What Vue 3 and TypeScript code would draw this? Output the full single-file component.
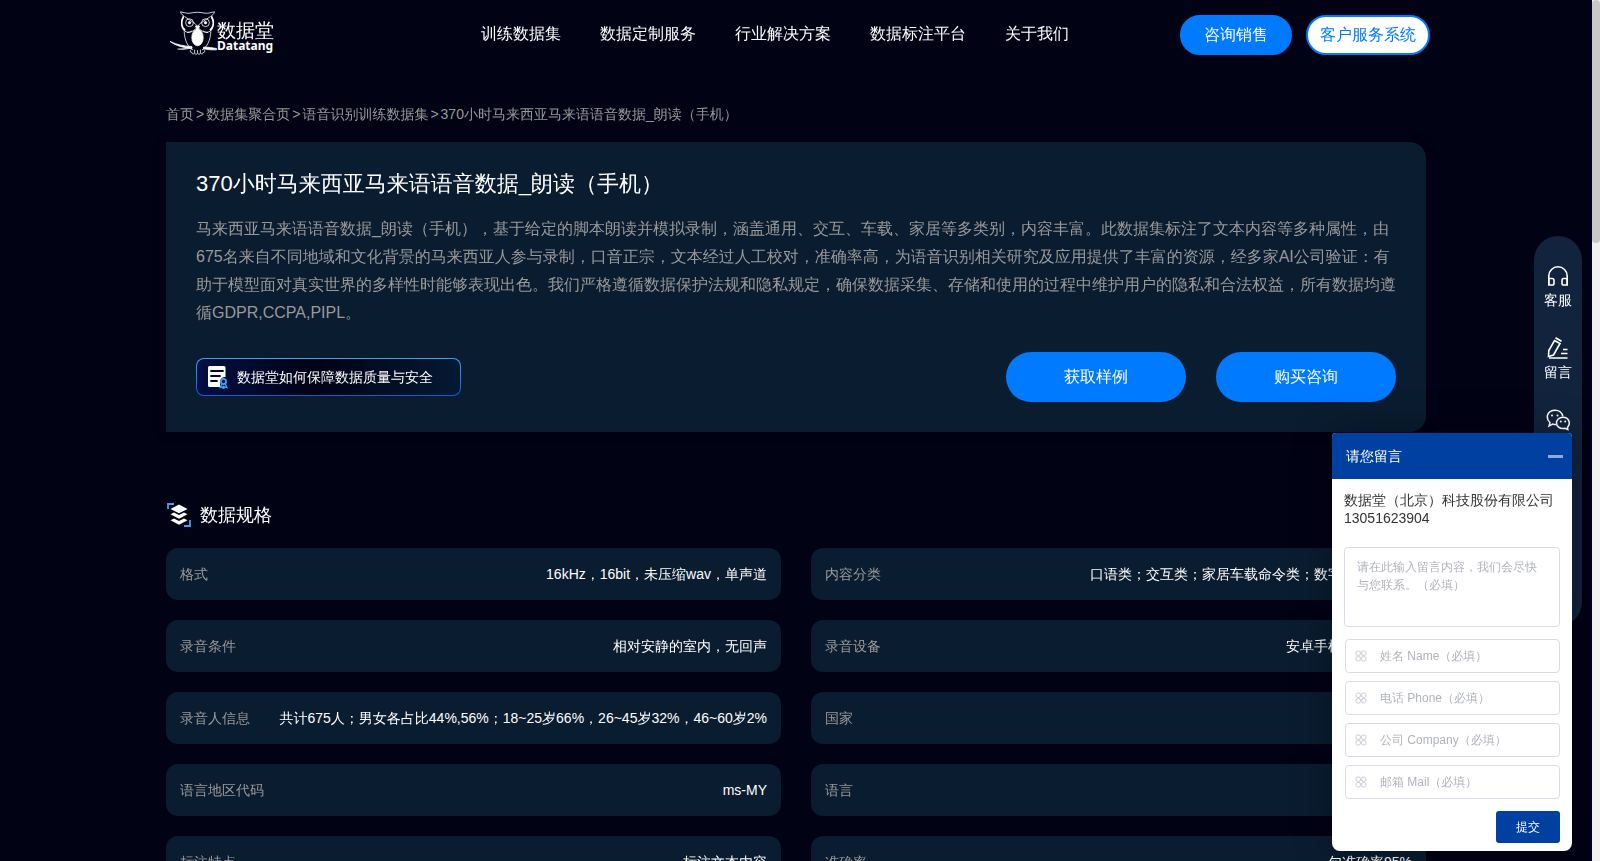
<script setup lang="ts">
import { ref } from 'vue'

interface Spec {
  label: string
  value: string
}

const navItems: string[] = ['训练数据集', '数据定制服务', '行业解决方案', '数据标注平台', '关于我们']
const crumbs: string[] = ['首页', '数据集聚合页', '语音识别训练数据集']
const title = '370小时马来西亚马来语语音数据_朗读（手机）'

const specs: Spec[] = [
  { label: '格式', value: '16kHz，16bit，未压缩wav，单声道' },
  { label: '内容分类', value: '口语类；交互类；家居车载命令类；数字类；通用类' },
  { label: '录音条件', value: '相对安静的室内，无回声' },
  { label: '录音设备', value: '安卓手机，苹果手机' },
  { label: '录音人信息', value: '共计675人；男女各占比44%,56%；18~25岁66%，26~45岁32%，46~60岁2%' },
  { label: '国家', value: '马来西亚' },
  { label: '语言地区代码', value: 'ms-MY' },
  { label: '语言', value: '马来语' },
  { label: '标注特点', value: '标注文本内容' },
  { label: '准确率', value: '句准确率95%' },
]

const fields = ref([
  { id: 'name', placeholder: '姓名 Name（必填）', value: '' },
  { id: 'phone', placeholder: '电话 Phone（必填）', value: '' },
  { id: 'company', placeholder: '公司 Company（必填）', value: '' },
  { id: 'mail', placeholder: '邮箱 Mail（必填）', value: '' },
])
const message = ref('')
</script>

<template>
  <div class="page">
    <header class="header">
      <a class="logo" href="#" aria-label="数据堂 Datatang">
        <svg width="108" height="46" viewBox="0 0 108 46" fill="none" stroke="#fff" stroke-width=".8">
          <path d="M10.500 .8C14 1.500 17 2.600 20 2.200c5-1.200 10-1.200 15 0 3 .4 6-.7 9.500-1.400-.8 2.700-2.400 3.600-3.500 4.200 3 5.500 3.200 11.500-.5 15C36 23 31 20.500 27.500 15.500 24 20.500 19 23 14.500 20c-3.700-3.500-3.500-9.500-.5-15-1.100-.6-2.700-1.500-3.500-4.200Z" />
          <path d="M14.500 5.500 25 12.500l2.500 3 2.500-3 10.500-7" />
          <path d="M13.500 5.500c-3 5-2 10.500 1.500 14M41.500 5.500c3 5 2 10.500-1.500 14" stroke-width="1.800" />
          <circle cx="19.500" cy="11.700" r="3.900" />
          <circle cx="35.500" cy="11.700" r="3.900" />
          <circle cx="19.500" cy="11.700" r="1.200" fill="#fff" />
          <circle cx="35.500" cy="11.700" r="1.200" fill="#fff" />
          <path d="M14.200 20.500c.3 8.500 3.500 15.500 8.800 18.500M40.800 20.500c-.3 8.500-3.500 15.500-8.800 18.500M17 21.500c1.500 0 3.500-.6 5-1.600M38 21.500c-1.500 0-3.500-.6-5-1.600" />
          <path d="m25.500 15 2 5 2-5Z" fill="#fff" />
          <ellipse cx="27.500" cy="26.500" rx="5.700" ry="8.300" fill="#fff" />
          <path d="M0 30.400c7 3.500 14 4.600 22 5.200v1.800C14 36.700 6 35 0 30.400ZM7.500 38c5 .6 9.500.2 14-1.200M33.500 36.200c5-.2 9 .6 13 1.300v1.300c-4 .2-8 0-13-1Z" fill="#fff" />
          <path d="M21 38.500c-1.600 1.700-.4 3.500.8 2.700.2 2.300 2.300 2.200 2.800.4.400 2.400 2.500 2.200 2.900 0 .4 2.200 2.500 2.400 2.900 0 .5 1.800 2.600 1.900 2.800-.4 1.200.8 2.400-1 .8-2.700M24.600 41.500v-2.800M27.500 41.500v-2.300M30.400 41.500v-2.800" />
          <text class="logo-cn" x="47" y="26">数据堂</text>
          <text class="logo-en" x="47" y="39">Datatang</text>
        </svg>
      </a>
      <nav class="nav">
        <a v-for="item in navItems" :key="item" href="#">{{ item }}</a>
      </nav>
      <div class="actions">
        <button class="pill sales" type="button">咨询销售</button>
        <button class="pill portal" type="button">客户服务系统</button>
      </div>
    </header>

    <main class="main">
      <nav class="crumbs" aria-label="breadcrumb">
        <template v-for="c in crumbs" :key="c">
          <a href="#">{{ c }}</a><span class="sep">&gt;</span>
        </template>
        <span>{{ title }}</span>
      </nav>

      <section class="hero">
        <h1>{{ title }}</h1>
        <p>马来西亚马来语语音数据_朗读（手机），基于给定的脚本朗读并模拟录制，涵盖通用、交互、车载、家居等多类别，内容丰富。此数据集标注了文本内容等多种属性，由675名来自不同地域和文化背景的马来西亚人参与录制，口音正宗，文本经过人工校对，准确率高，为语音识别相关研究及应用提供了丰富的资源，经多家AI公司验证：有助于模型面对真实世界的多样性时能够表现出色。我们严格遵循数据保护法规和隐私规定，确保数据采集、存储和使用的过程中维护用户的隐私和合法权益，所有数据均遵循GDPR,CCPA,PIPL。</p>
        <div class="hero-foot">
          <a class="badge" href="#">
            <svg width="22" height="24" viewBox="0 0 22 24">
              <path d="M2.500 1h14.500a1.500 1.500 0 0 1 1.500 1.500V12a5 5 0 0 0-5.500 5c0 1.700.2 3 0 5H2.500A1.500 1.500 0 0 1 1 20.500v-18A1.500 1.500 0 0 1 2.500 1Z" fill="#fff" />
              <path d="M4 6h12M4 11h9M4 16h6" stroke="#020a38" stroke-width="1.800" stroke-linecap="round" />
              <circle cx="16.500" cy="16.500" r="2.600" fill="none" stroke="#3ea0f5" stroke-width="1.800" />
              <path d="m14.800 19-1.600 3.500 2-.4.800 1 .5-2.500.5 2.500.9-1 2 .4L18.300 19" fill="none" stroke="#3ea0f5" stroke-width="1.400" />
            </svg>
            <span>数据堂如何保障数据质量与安全</span>
          </a>
          <div class="hero-buttons">
            <button type="button">获取样例</button>
            <button type="button">购买咨询</button>
          </div>
        </div>
      </section>

      <section class="specs">
        <h2>
          <svg width="26" height="26" viewBox="0 0 26 26">
            <path d="M2 7V2h6M18 24h6v-6" fill="none" stroke="#3ea0f5" stroke-width="1.800" />
            <path d="m13 2.500 8.500 4.500L13 11.200 4.500 7Z" fill="#fff" />
            <path d="m4.500 12.300 3.500-1.800 5 2.500 5-2.500 3.500 1.800L13 16.800ZM4.500 18.200 8 16.400l5 2.500 5-2.500 3.500 1.800L13 22.700Z" fill="#fff" />
          </svg>
          数据规格
        </h2>
        <dl class="grid">
          <div v-for="s in specs" :key="s.label" class="spec">
            <dt>{{ s.label }}</dt>
            <dd>{{ s.value }}</dd>
          </div>
        </dl>
      </section>
    </main>

    <aside class="rail">
      <a href="#">
        <svg width="24" height="24" viewBox="0 0 24 24" fill="none" stroke="#fff" stroke-width="1.600">
          <path d="M2.800 21V12a9.200 9.200 0 0 1 18.400 0v9" />
          <path d="M2.800 14.500h3.400q1.800 0 1.800 1.800v2.900q0 1.800-1.800 1.800H2.800ZM21.200 14.500h-3.400q-1.800 0-1.800 1.800v2.900q0 1.800 1.800 1.800h3.400Z" />
        </svg>
        <span>客服</span>
      </a>
      <a href="#">
        <svg width="24" height="24" viewBox="0 0 24 24" fill="none" stroke="#fff" stroke-width="1.600">
          <path d="m8.500 4.500 5.500 3-6.500 11.500-5 1.500.3-6ZM9.500 1.800l6 3.500M17 13.500h4.500M15 17.500h6.500M3 22h18.500" />
        </svg>
        <span>留言</span>
      </a>
      <a href="#" aria-label="微信">
        <svg width="24" height="24" viewBox="0 0 24 24" fill="none" stroke="#fff" stroke-width="1.500">
          <path d="M10.500 16.500c-1.300.2-2.600 0-3.800-.5L3 18l1-3.500C-.5 10.500.5 3 8.500 2.200c4.500-.2 7.800 2.300 8.300 6.300" />
          <path d="M21.500 19.200c3.500-3.500 1.500-10-4.500-10-4 0-6.500 2.700-6.500 5.700 0 4 4 6.500 8.500 5.300l2.800 1.300Z" />
          <g fill="#fff" stroke="none"><circle cx="6" cy="7.500" r="1" /><circle cx="11.500" cy="7.500" r="1" /><circle cx="14.800" cy="13.500" r="1" /><circle cx="19.200" cy="13.500" r="1" /></g>
        </svg>
      </a>
    </aside>

    <form class="chat" @submit.prevent>
      <div class="chat-head">
        <span>请您留言</span>
        <button type="button" aria-label="最小化"></button>
      </div>
      <div class="chat-body">
        <p>数据堂（北京）科技股份有限公司<br>13051623904</p>
        <textarea v-model="message" aria-label="留言内容" placeholder="请在此输入留言内容，我们会尽快与您联系。（必填）"></textarea>
        <label v-for="f in fields" :key="f.id" class="field" :for="f.id">
          <svg width="12" height="12" viewBox="0 0 12 12" fill="none" stroke="#c9cad6" stroke-width="1">
            <rect x="1" y="1" width="4.500" height="4.500" rx="1.800" />
            <rect x="6.500" y="1" width="4.500" height="4.500" rx="1.800" />
            <rect x="1" y="6.500" width="4.500" height="4.500" rx="1.800" />
            <rect x="6.500" y="6.500" width="4.500" height="4.500" rx="1.800" />
          </svg>
          <input :id="f.id" v-model="f.value" type="text" :placeholder="f.placeholder">
        </label>
        <button class="submit" type="submit">提交</button>
      </div>
    </form>

    <div class="scrollbar" aria-hidden="true"><div class="thumb"></div></div>
  </div>
</template>

<style>
html,
body {
  margin: 0;
  background: #020215;
}
</style>

<style scoped>
.page {
  box-sizing: border-box;
  height: 100vh;
  overflow: hidden;
  padding-right: 8px;
  background: #020215;
  color: #fff;
  font-family: "Liberation Sans", Arial, "WenQuanYi Zen Hei", "Noto Sans CJK SC", sans-serif;
  font-size: 14px;
}
.page * {
  box-sizing: border-box;
}
a {
  color: inherit;
  text-decoration: none;
}
button,
input,
textarea {
  font: inherit;
}
button {
  padding: 0;
  border: 0;
  color: #fff;
  cursor: pointer;
}

.header {
  display: flex;
  align-items: center;
  max-width: 1268px;
  height: 70px;
  margin: 0 auto;
  padding-left: 8px;
}
.logo {
  height: 48px;
}
.logo svg {
  display: block;
}
.logo text {
  fill: #fff;
  stroke: none;
}
.logo-cn {
  font-size: 19px;
}
.logo-en {
  font-family: "Noto Sans", sans-serif;
  font-size: 12px;
  font-weight: 700;
}
.nav {
  display: flex;
  gap: 39px;
  margin-left: 203px;
  font-size: 16px;
  line-height: 24px;
  padding-bottom: 2px;
}
.actions {
  display: flex;
  gap: 14px;
  margin-left: auto;
}
.pill {
  height: 40px;
  border: 2px solid #007aff;
  border-radius: 20px;
  font-size: 16px;
  line-height: 36px;
}
.sales {
  padding: 0 22px;
  background: #007aff;
}
.portal {
  padding: 0 12px;
  background: #fff;
  color: #007aff;
}

.main {
  max-width: 1260px;
  margin: 0 auto;
}
.crumbs {
  display: flex;
  padding: 34px 0 18px;
  color: #999;
  line-height: 20px;
}
.sep {
  margin: 0 2px;
}
.hero {
  padding: 30px;
  border-radius: 0 16px 16px 0;
  background: #0a1c30;
  box-shadow: 0 0 12px rgba(0, 0, 0, 0.4);
}
.hero h1 {
  margin: 0 0 19px;
  font-size: 22px;
  font-weight: 400;
  line-height: 24px;
}
.hero p {
  margin: 0 0 25px;
  color: #999;
  font-size: 16px;
  line-height: 28px;
}
.hero-foot {
  display: flex;
  align-items: center;
  justify-content: space-between;
}
.badge {
  display: flex;
  align-items: center;
  gap: 8px;
  width: 265px;
  height: 38px;
  padding-left: 10px;
  border: 1px solid transparent;
  border-radius: 8px;
  background:
    linear-gradient(90deg, #000f42, #020215 45%, #031a33) padding-box,
    linear-gradient(#3ea0f5, #1259d8) border-box;
  line-height: 36px;
}
.hero-buttons {
  display: flex;
  gap: 30px;
}
.hero-buttons button {
  width: 180px;
  height: 50px;
  border-radius: 25px;
  background: #007aff;
  font-size: 16px;
  line-height: 50px;
}

.specs h2 {
  display: flex;
  align-items: center;
  gap: 8px;
  margin: 70px 0 20px;
  font-size: 18px;
  font-weight: 400;
  line-height: 26px;
}
.grid {
  display: grid;
  grid-template-columns: 1fr 1fr;
  gap: 20px 30px;
  margin: 0;
}
.spec {
  display: flex;
  justify-content: space-between;
  padding: 0 14px;
  border-radius: 12px;
  background: #0a1c30;
  line-height: 52px;
}
.spec dt {
  color: #999;
}
.spec dd {
  margin: 0;
}

.rail {
  position: fixed;
  top: 236px;
  right: 18px;
  display: flex;
  flex-direction: column;
  gap: 24px;
  width: 48px;
  height: 390px;
  padding-top: 28px;
  border-radius: 24px;
  background: #12233d;
}
.rail a {
  display: flex;
  flex-direction: column;
  align-items: center;
  gap: 2px;
  height: 48px;
  line-height: 20px;
}

.chat {
  position: fixed;
  right: 28px;
  bottom: 10px;
  width: 240px;
  border-radius: 4px 4px 8px 8px;
  background: #fff;
  box-shadow: 0 0 40px rgba(0, 0, 0, 0.3);
}
.chat-head {
  display: flex;
  align-items: center;
  justify-content: space-between;
  height: 46px;
  padding: 0 9px 0 14px;
  border-radius: 4px 4px 0 0;
  background: #0040a0;
  line-height: 46px;
}
.chat-head button {
  width: 15px;
  height: 3px;
  background: #8fa9d6;
}
.chat-body {
  display: flex;
  flex-direction: column;
  padding: 12px 12px 8px;
  font-size: 12px;
}
.chat-body p {
  margin: 0 0 20px;
  color: #333;
  font-size: 14px;
  line-height: 18px;
}
textarea {
  height: 80px;
  margin: 0 0 12px;
  padding: 10px 12px;
  border: 1px solid #dadbe6;
  border-radius: 4px;
  background: #fff;
  line-height: 18px;
  resize: none;
}
.field {
  display: flex;
  align-items: center;
  gap: 13px;
  height: 34px;
  margin: 0 0 8px 1px;
  padding: 0 9px;
  border: 1px solid #dadbe6;
  border-radius: 4px;
}
.field svg {
  flex: none;
}
.field input {
  flex: 1;
  min-width: 0;
  height: 32px;
  padding: 0;
  border: 0;
  outline: 0;
  background: none;
  line-height: 32px;
}
textarea::placeholder,
input::placeholder {
  color: #b0b3bb;
}
.submit {
  align-self: flex-end;
  width: 64px;
  height: 32px;
  margin-top: 4px;
  border-radius: 3px;
  background: #0040a0;
}

.scrollbar {
  position: fixed;
  top: 0;
  right: 0;
  bottom: 0;
  width: 8px;
  background: #f1f1f1;
}
.thumb {
  height: 243px;
  border-radius: 4px;
  background: #c8c8c8;
}
</style>
